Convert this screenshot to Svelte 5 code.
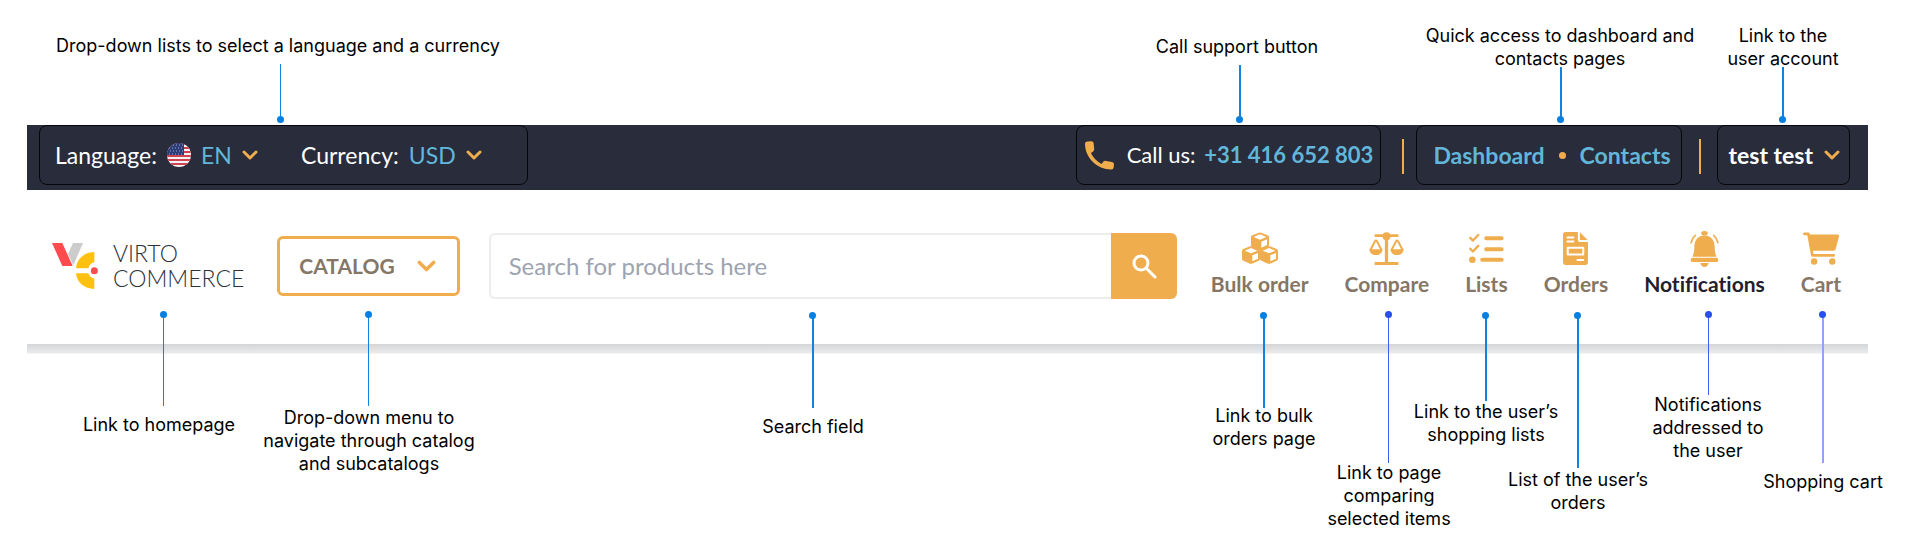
<script>
  // Width of the canvas on which callout positions are plotted.
  const CANVAS = 1909;

  // x/dot: anchor point, end: far end of the leader line, tx/ty: centre and top of the caption.
  const callouts = [
    { x: 281, dot: 120, end: 64, tx: 278, ty: 34, w: 1, lines: ['Drop-down lists to select a language and a currency'] },
    { x: 1240, dot: 120, end: 65, tx: 1237, ty: 35, w: 2, lines: ['Call support button'] },
    { x: 1561, dot: 120, end: 67, tx: 1560, ty: 24, w: 2, lines: ['Quick access to dashboard and', 'contacts pages'] },
    { x: 1783, dot: 120, end: 67, tx: 1783, ty: 24, w: 2, lines: ['Link to the', 'user account'] },
    { x: 164, dot: 315, end: 406, tx: 159, ty: 413, w: 1, lines: ['Link to homepage'] },
    { x: 369, dot: 315, end: 406, tx: 369, ty: 406, w: 1, lines: ['Drop-down menu to', 'navigate through catalog', 'and subcatalogs'] },
    { x: 813, dot: 316, end: 408, tx: 813, ty: 415, w: 2, lines: ['Search field'] },
    { x: 1264, dot: 316, end: 408, tx: 1264, ty: 404, w: 2, lines: ['Link to bulk', 'orders page'] },
    { x: 1389, dot: 315, end: 463, tx: 1389, ty: 461, w: 1, tone: 'violet', lines: ['Link to page', 'comparing', 'selected items'] },
    { x: 1486, dot: 316, end: 401, tx: 1486, ty: 400, w: 2, lines: ['Link to the user’s', 'shopping lists'] },
    { x: 1578, dot: 316, end: 468, tx: 1578, ty: 468, w: 2, lines: ['List of the user’s', 'orders'] },
    { x: 1709, dot: 315, end: 395, tx: 1708, ty: 393, w: 1, tone: 'violet', lines: ['Notifications', 'addressed to', 'the user'] },
    { x: 1823, dot: 315, end: 463, tx: 1823, ty: 470, w: 2, tone: 'pale', lines: ['Shopping cart'] }
  ];

  const links = ['Bulk order', 'Compare', 'Lists', 'Orders', 'Notifications', 'Cart'];
  const pct = (x) => `${(x / CANVAS) * 100}%`;
</script>

{#snippet chevron(width, height)}
  <svg class="chevron" {width} {height} viewBox="0 0 16 10" aria-hidden="true">
    <path d="M2 2 8 8 14 2" />
  </svg>
{/snippet}

{#snippet cube(x, y)}
  <g transform="translate({x} {y})">
    <path d="M24 1Q27 0 30 1L50 9Q54 11 54 15V38Q54 42 50 44L30 53Q27 54 24 53L4 44Q0 42 0 38V15Q0 11 4 9Z" />
    <path class="cut" d="M27 6 46 14 27 22 8 14ZM31 28 48 21V38L31 46Z" />
  </g>
{/snippet}

{#snippet icon(name)}
  {#if name === 'Bulk order'}
    <svg width="36" height="33" viewBox="0 0 108 99" aria-hidden="true">
      {@render cube(27, 1)}
      {@render cube(0, 42)}
      {@render cube(54, 42)}
    </svg>
  {:else if name === 'Compare'}
    <svg width="35" height="33" viewBox="0 0 104 100" aria-hidden="true">
      <path d="M16 7H88V15H57V91H88V100H16V91H47V15H16Z" />
      <circle cx="52" cy="13" r="12" />
      <path d="M0 52H40C40 62 31 70 20 70S0 62 0 52ZM64 52H104C104 62 95 70 84 70S64 62 64 52Z" />
      <path class="line" stroke-width="6" d="M4 53 17 28Q20 23 23 28L36 53M68 53 81 28Q84 23 87 28L100 53" />
    </svg>
  {:else if name === 'Lists'}
    <svg width="35" height="33" viewBox="0 0 106 98" aria-hidden="true">
      <path class="line" stroke-width="7" d="M4 17 12 25 28 8M4 50 12 58 28 41" />
      <circle cx="10" cy="83" r="10" />
      <path class="line" stroke-width="12" d="M52 18H99M52 51H99M40 83H99" />
    </svg>
  {:else if name === 'Orders'}
    <svg width="25" height="33" viewBox="0 0 74 98" aria-hidden="true">
      <path d="M8 0H44V22Q44 30 52 30H74V90Q74 98 66 98H8Q0 98 0 90V8Q0 0 8 0ZM50 1 73 24H50Z" />
      <path class="cut-line" d="M13 16H31M13 28H31M43 83H60M14 47H60V67H14Z" />
    </svg>
  {:else if name === 'Notifications'}
    <svg width="29" height="36" viewBox="0 0 88 110" aria-hidden="true">
      <ellipse cx="44" cy="7" rx="10" ry="7" />
      <path d="M44 14C63 14 74 28 75 46 75 62 77 70 81 79H7C11 70 13 62 13 46 14 28 25 14 44 14ZM31 98H57C55 106 50 110 44 110S33 106 31 98Z" />
      <rect x="2" y="82" width="84" height="13" rx="6" />
      <path class="line" stroke-width="5" d="M3 36C5 26 9 19 16 13M85 36C83 26 79 19 72 13" />
    </svg>
  {:else}
    <svg width="36" height="33" viewBox="0 0 107 97" aria-hidden="true">
      <path class="line" stroke-width="8" d="M4 5H16L28 69H91" />
      <path d="M17 7H102Q108 7 107 13L97 51Q96 55 91 55H27Z" />
      <circle cx="33" cy="87" r="9.500" />
      <circle cx="87" cy="87" r="9.500" />
    </svg>
  {/if}
{/snippet}

<main>
  <header>
    <div class="topbar">
      <div class="group locale">
        <div class="field">
          <label for="language">Language:</label>
          <svg class="flag" width="24" height="24" viewBox="0 0 24 24" aria-hidden="true">
            <clipPath id="disc"><circle cx="12" cy="12" r="12" /></clipPath>
            <g clip-path="url(#disc)">
              <rect width="24" height="24" fill="#f4f1f2" />
              <path d="M0 1H24M0 5H24M0 9H24M0 13H24M0 17H24M0 21H24" stroke="#cf4350" stroke-width="2" />
              <rect width="17" height="12" fill="#2c3c78" />
              <path d="M3 2H17M2 5H17M3 8H17M2 11H17" stroke="#a3abc8" stroke-dasharray="1 2" />
            </g>
          </svg>
          <span class="picker">
            <select id="language"><option>EN</option></select>
            {@render chevron(16, 10)}
          </span>
        </div>
        <div class="field">
          <label for="currency">Currency:</label>
          <span class="picker">
            <select id="currency"><option>USD</option></select>
            {@render chevron(16, 10)}
          </span>
        </div>
      </div>

      <div class="group phone">
        <svg width="29" height="29" viewBox="0 0 88 87" aria-hidden="true">
          <path d="M6 1 19 0Q25 0 26 5L28 24Q28 28 25 31L18 36C24 50 36 62 50 69L56 62Q59 59 64 60L82 63Q88 64 88 70L87 80Q86 86 80 86C36 86 0 50 0 8Q0 2 6 1Z" />
        </svg>
        <span>Call us: <a href="tel:+31416652803">+31 416 652 803</a></span>
      </div>
      <span class="divider wide"></span>
      <nav class="group pages">
        <a href="#dashboard">Dashboard</a>
        <span class="bullet"></span>
        <a href="#contacts">Contacts</a>
      </nav>
      <span class="divider"></span>
      <button class="group account" type="button">
        test test
        {@render chevron(16, 10)}
      </button>
    </div>

    <div class="mainbar">
      <a class="logo" href="#home">
        <svg width="46" height="48" viewBox="0 0 138 144" aria-hidden="true">
          <path fill="#ccc" d="M63 3H93L64 70 48 36Z" />
          <path fill="#ff4b4e" d="M0 3H31L62 72H31Z" />
          <path fill="#ffc110" d="M127 30V61Q113 64 109 79H72C74 51 97 30 127 30ZM72 94H109Q113 107 127 110V141C97 141 74 121 72 94Z" />
          <circle cx="127" cy="86" r="10.500" fill="#ff4b4e" />
        </svg>
        <span class="wordmark"><span>VIRTO</span><span>COMMERCE</span></span>
      </a>
      <button class="catalog" type="button">
        CATALOG
        {@render chevron(19, 12)}
      </button>
      <form class="search" onsubmit={(e) => e.preventDefault()}>
        <input type="search" placeholder="Search for products here" aria-label="Search for products here" />
        <button type="submit" aria-label="Search">
          <svg width="26" height="26" viewBox="0 0 26 26" aria-hidden="true">
            <circle cx="10" cy="10" r="7" />
            <path d="M15 15 24 24" />
          </svg>
        </button>
      </form>
      <nav class="links">
        {#each links as name}
          <a href="#{name.toLowerCase().replace(' ', '-')}" class:active={name === 'Notifications'}>
            <span class="icon">{@render icon(name)}</span>
            {name}
          </a>
        {/each}
      </nav>
    </div>
    <div class="shade"></div>
  </header>

  {#each callouts as c}
    <div class="callout {c.tone ?? ''}">
      <span
        class="leader"
        style:left={pct(c.x)}
        style:top="{Math.min(c.dot, c.end)}px"
        style:height="{Math.abs(c.end - c.dot)}px"
        style:width="{c.w}px"
      ></span>
      <span class="dot" style:left={pct(c.x)} style:top="{c.dot}px"></span>
      <div class="caption" style:left={pct(c.tx)} style:top="{c.ty}px">
        {#each c.lines as line}<span>{line}</span>{/each}
      </div>
    </div>
  {/each}
</main>

<style>
  :global(body) {
    background: #fff;
  }

  main {
    position: relative;
    box-sizing: border-box;
    min-height: 537px;
    padding: 125px 41px 0 27px;
    overflow: hidden;
    font-family: Lato, sans-serif;
    font-size: 23px;
    line-height: 26px;
    font-variant-ligatures: none;
  }

  a {
    color: #62b6da;
    text-decoration: none;
  }

  button,
  select,
  input {
    margin: 0;
    font: inherit;
  }

  svg {
    display: block;
    flex: none;
    fill: #f0ad4e;
  }

  .chevron {
    fill: none;
    stroke: #f0ad4e;
    stroke-width: 3;
    stroke-linecap: round;
    stroke-linejoin: round;
  }

  .topbar {
    display: flex;
    align-items: flex-start;
    height: 65px;
    padding: 0 18px 0 12px;
    background: #292c3b;
    color: #fff;
  }

  .group {
    display: flex;
    align-items: center;
    box-sizing: border-box;
    height: 60px;
    border: 1px solid #05060a;
    border-radius: 8px;
    white-space: nowrap;
  }

  .locale {
    gap: 43px;
    margin-right: auto;
    padding: 0 45px 0 15px;
  }

  .field {
    display: flex;
    align-items: center;
    gap: 10px;
  }

  .picker {
    display: grid;
    align-items: center;
  }

  .picker > :global(*) {
    grid-area: 1 / 1;
  }

  .picker .chevron {
    justify-self: end;
    pointer-events: none;
  }

  select {
    appearance: none;
    padding: 0 26px 0 0;
    border: 0;
    background: transparent;
    color: #62b6da;
  }

  .phone {
    gap: 13px;
    padding: 0 7px 0 8px;
    font-size: 22px;
  }

  .phone a,
  .pages,
  .account {
    font-weight: 700;
  }

  .phone a {
    margin-left: 3px;
  }

  .divider {
    width: 2px;
    height: 35px;
    margin: 14px 16px 0 17px;
    background: #f0ad4e;
  }

  .divider.wide {
    margin: 14px 12px 0 21px;
  }

  .pages {
    gap: 14px;
    padding: 0 10px 0 16px;
  }

  .bullet {
    width: 7px;
    height: 7px;
    border-radius: 50%;
    background: #f0ad4e;
  }

  .account {
    gap: 11px;
    padding: 0 9px 0 11px;
    background: transparent;
    color: #fff;
  }

  .mainbar {
    display: flex;
    align-items: center;
    height: 151px;
    padding: 0 27px 3px 25px;
  }

  .logo {
    display: flex;
    align-items: center;
    gap: 15px;
    margin-right: 33px;
    color: #2c323c;
  }

  .wordmark {
    display: grid;
    font-size: 23px;
    font-weight: 300;
    line-height: 25px;
  }

  .catalog {
    display: flex;
    align-items: center;
    gap: 22px;
    height: 60px;
    margin-right: 29px;
    padding: 0 21px 0 19px;
    border: 3px solid #f0ad4e;
    border-radius: 6px;
    background: #fff;
    color: #857665;
    font-size: 21px;
    font-weight: 700;
  }

  .search {
    display: flex;
    flex: 1;
    height: 66px;
    margin-right: 34px;
  }

  .search input {
    flex: 1;
    min-width: 0;
    padding: 0 18px;
    border: 2px solid #ededee;
    border-right: 0;
    border-radius: 6px 0 0 6px;
    outline: 0;
    background: #fff;
    font-size: 24px;
    appearance: none;
  }

  .search input::placeholder {
    color: #9ea3b0;
    opacity: 1;
  }

  .search button {
    display: grid;
    place-items: center;
    width: 66px;
    padding: 0;
    border: 0;
    border-radius: 0 6px 6px 0;
    background: #f0ad4e;
  }

  .search svg {
    fill: none;
    stroke: #fff;
    stroke-width: 3;
    stroke-linecap: round;
  }

  .links {
    display: flex;
    gap: 36px;
    padding-bottom: 4px;
  }

  .links a {
    display: flex;
    flex-direction: column;
    align-items: center;
    gap: 4px;
    color: #857665;
    font-size: 21px;
    font-weight: 700;
    white-space: nowrap;
  }

  .links a.active {
    color: #1f2130;
  }

  .icon {
    display: grid;
    place-items: center;
    height: 36px;
  }

  .icon .cut {
    fill: #fff;
  }

  .icon .line {
    fill: none;
    stroke: #f0ad4e;
    stroke-linecap: round;
    stroke-linejoin: round;
  }

  .icon .cut-line {
    fill: none;
    stroke: #fff;
    stroke-width: 6;
    stroke-linecap: round;
    stroke-linejoin: round;
  }

  .shade {
    height: 9px;
    border-bottom: 1px solid #f4f4f5;
    background: linear-gradient(#d3d5d8, #eaebec);
  }

  .callout {
    --dot: #0780e2;
    --line: #0f82e2;
  }

  .callout.violet {
    --dot: #2a50ea;
    --line: #3a60eb;
  }

  .callout.pale {
    --dot: #2a50ea;
    --line: #8fa3f3;
  }

  .leader,
  .dot,
  .caption {
    position: absolute;
  }

  .leader {
    margin-left: -1px;
    background: var(--line);
  }

  .dot {
    width: 7px;
    height: 7px;
    margin: -4px 0 0 -4px;
    border-radius: 50%;
    background: var(--dot);
  }

  .caption {
    display: flex;
    flex-direction: column;
    align-items: center;
    width: 0;
    color: #000;
    font-family: Inter, sans-serif;
    font-size: 18px;
    line-height: 23px;
    white-space: nowrap;
  }
</style>
